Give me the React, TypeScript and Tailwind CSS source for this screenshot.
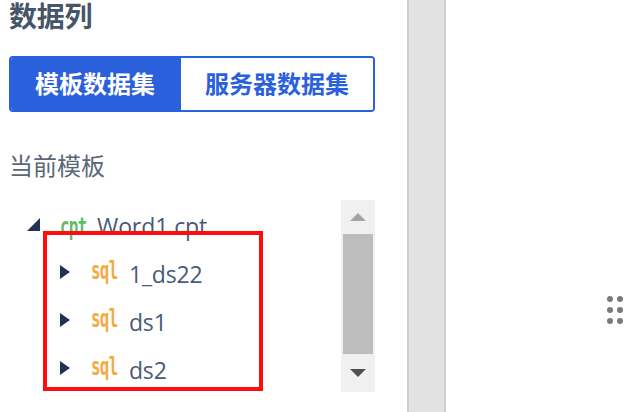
const CJK = "font-['Open_Sans','Noto_Sans_CJK_SC',sans-serif]";

function Row({ label }: { label: string }) {
  return (
    <div className="flex items-center h-[48px] pl-[60px]">
      <svg width="10" height="14" viewBox="0 0 10 14" className="shrink-0">
        <path d="M0 0L10 7L0 14Z" fill="#1f3358" />
      </svg>
      <span className="ml-[21px] w-[38px] shrink-0 origin-left scale-x-[0.72] scale-y-[1.1] text-[22px] leading-none font-bold tracking-[-1px] text-[#f5a93e] font-['DejaVu_Sans_Mono',monospace] -mt-[2px]">
        sql
      </span>
      <span className="text-[23px] leading-none tracking-[-0.2px] text-[#475a78] mt-[4px]">{label}</span>
    </div>
  );
}

export default function App() {
  return (
    <div className={`flex h-[412px] w-[628px] overflow-hidden bg-white ${CJK}`}>
      <div className="w-[407px] shrink-0 pl-[9px] pr-[32px]">
        <h1 className="pt-[1px] text-[28px] leading-[30px] font-bold tracking-[-0.3px] text-[#475569]">数据列</h1>
        <div className="mt-[25px] flex h-[56px] rounded-[4px] border-2 border-[#2b60dc] text-[24px] font-bold overflow-hidden">
          <div className="flex w-[170px] items-center justify-center bg-[#2b60dc] pr-[2px] text-white">模板数据集</div>
          <div className="flex flex-1 items-center justify-center bg-white text-[#2b60dc]">服务器数据集</div>
        </div>
        <div className="mt-[38px] text-[24px] leading-[32px] text-[#5b6778]">当前模板</div>
        <div className="relative mt-[18px] flex">
          <div className="flex-1 -ml-[9px]">
            <div className="flex items-center h-[48px] pl-[27px]">
              <svg width="13" height="13" viewBox="0 0 13 13" className="shrink-0">
                <path d="M13 0V13H0Z" fill="#1f3358" />
              </svg>
              <span className="ml-[20px] w-[37px] shrink-0 origin-left scale-x-[0.72] scale-y-[1.1] text-[22px] leading-none font-bold tracking-[-1px] text-[#62bb6a] font-['DejaVu_Sans_Mono',monospace] mt-[5px]">
                cpt
              </span>
              <span className="text-[23px] leading-none tracking-[-0.1px] text-[#475a78] mt-[4px]">Word1.cpt</span>
            </div>
            <Row label="1_ds22" />
            <Row label="ds1" />
            <Row label="ds2" />
          </div>
          <div className="flex h-[192px] w-[34px] flex-col items-center justify-between bg-[#f0f0f0]">
            <div className="flex h-[34px] items-center justify-center">
              <svg width="16" height="8" viewBox="0 0 16 8"><path d="M8 0L16 8H0Z" fill="#a3a3a3" /></svg>
            </div>
            <div className="h-[120px] w-[30px] bg-[#bdbdbd]" />
            <div className="flex h-[38px] items-center justify-center">
              <svg width="16" height="8" viewBox="0 0 16 8"><path d="M0 0H16L8 8Z" fill="#505050" /></svg>
            </div>
          </div>
          <div className="absolute left-[34px] top-[31px] h-[160px] w-[220px] border-[4px] border-[#ff0d0d]" />
        </div>
      </div>
      <div className="w-[39px] shrink-0 border-x-2 border-x-[#cfcfcf] bg-[#e2e2e2]" />
      <div className="flex flex-1 justify-end pt-[296px] pr-[5px]">
        <div className="grid h-[26px] grid-cols-2 gap-x-[4px] gap-y-[5px] content-start">
          {[0, 1, 2, 3, 4, 5].map((i) => (
            <span key={i} className="h-[6px] w-[6px] rounded-full bg-[#7a7a7a]" />
          ))}
        </div>
      </div>
    </div>
  );
}
